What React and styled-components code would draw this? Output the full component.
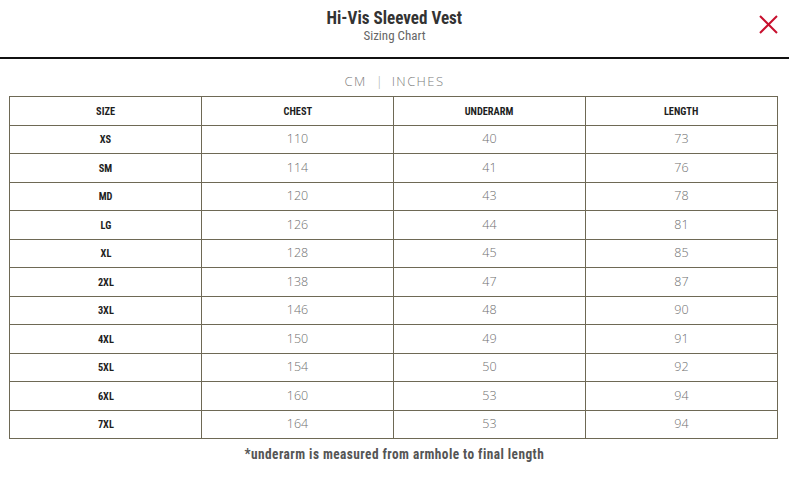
import React from "react";
import styled, { createGlobalStyle } from "styled-components";

const Global = createGlobalStyle`
  html, body { margin: 0; padding: 0; background: #fff; }
  body { font-family: "Open Sans", "Liberation Sans", sans-serif; }
`;

const COND = `"Roboto Condensed", "Roboto", "Liberation Sans", sans-serif`;

const Page = styled.div`
  width: 789px;
  height: 478px;
  display: flex;
  flex-direction: column;
  overflow: hidden;
`;

const Narrow = styled.span`
  display: inline-block;
  font-family: ${COND};
  transform: scaleX(${(p) => p.$sx || 0.9});
  transform-origin: center;
  white-space: nowrap;
`;

const Header = styled.header`
  position: relative;
  height: 59px;
  border-bottom: 2px solid #111;
  display: flex;
  flex-direction: column;
  align-items: center;
  padding-top: 7px;
  box-sizing: border-box;
`;

const Title = styled.h1`
  margin: 0;
  font-weight: 700;
  font-size: 18px;
  line-height: 20px;
  color: #333;
`;

const Subtitle = styled.div`
  font-size: 13px;
  line-height: 15px;
  color: #666;
`;

const Close = styled.button`
  position: absolute;
  right: 10px;
  top: 14px;
  width: 21px;
  height: 21px;
  border: 0;
  background: none;
  padding: 0;
  cursor: pointer;
  svg { display: block; }
`;

const Units = styled.div`
  margin-top: 13px;
  display: flex;
  justify-content: center;
  align-items: center;
  gap: 9px;
  font-family: "Open Sans", sans-serif;
  font-weight: 300;
  font-size: 13px;
  letter-spacing: 1.4px;
  color: #7d7d7d;
  line-height: 18px;
`;

const Sep = styled.span`
  color: #aaa;
  letter-spacing: 0;
`;

const Table = styled.table`
  margin: 6px 11px 0 9px;
  width: 769px;
  border-collapse: collapse;
  table-layout: fixed;
  border: 1.5px solid #6e6955;
`;

const Row = styled.tr`
  height: 28.5px;
`;

const Cell = styled.td`
  border: 1.5px solid #6e6955;
  text-align: center;
  padding: 0 0 1px;
  font-family: "Open Sans", sans-serif;
  font-weight: ${(p) => (p.$bold ? 700 : 300)};
  font-size: ${(p) => (p.$bold ? "11.5px" : "12.5px")};
  color: ${(p) => (p.$bold ? "#1e1e1e" : "#6f6f6f")};
`;

const Note = styled.div`
  margin-top: 4px;
  text-align: center;
  font-weight: 700;
  font-size: 15px;
  letter-spacing: 0.5px;
  color: #555;
`;

const data = [
  ["XS", 110, 40, 73],
  ["SM", 114, 41, 76],
  ["MD", 120, 43, 78],
  ["LG", 126, 44, 81],
  ["XL", 128, 45, 85],
  ["2XL", 138, 47, 87],
  ["3XL", 146, 48, 90],
  ["4XL", 150, 49, 91],
  ["5XL", 154, 50, 92],
  ["6XL", 160, 53, 94],
  ["7XL", 164, 53, 94],
];

const heads = ["SIZE", "CHEST", "UNDERARM", "LENGTH"];

export default function App() {
  return (
    <Page>
      <Global />
      <Header>
        <Title><Narrow $sx={0.95}>Hi-Vis Sleeved Vest</Narrow></Title>
        <Subtitle><Narrow $sx={1}>Sizing Chart</Narrow></Subtitle>
        <Close aria-label="Close">
          <svg width="21" height="21" viewBox="0 0 21 21">
            <path d="M2 2 L19 19 M19 2 L2 19" stroke="#c8102e" strokeWidth="2" />
          </svg>
        </Close>
      </Header>
      <Units>
        <span>CM</span>
        <Sep>|</Sep>
        <span>INCHES</span>
      </Units>
      <Table>
        <tbody>
          <Row>
            {heads.map((h) => (
              <Cell $bold key={h}><Narrow>{h}</Narrow></Cell>
            ))}
          </Row>
          {data.map((r) => (
            <Row key={r[0]}>
              <Cell $bold><Narrow>{r[0]}</Narrow></Cell>
              <Cell>{r[1]}</Cell>
              <Cell>{r[2]}</Cell>
              <Cell>{r[3]}</Cell>
            </Row>
          ))}
        </tbody>
      </Table>
      <Note><Narrow $sx={0.89}>*underarm is measured from armhole to final length</Narrow></Note>
    </Page>
  );
}
